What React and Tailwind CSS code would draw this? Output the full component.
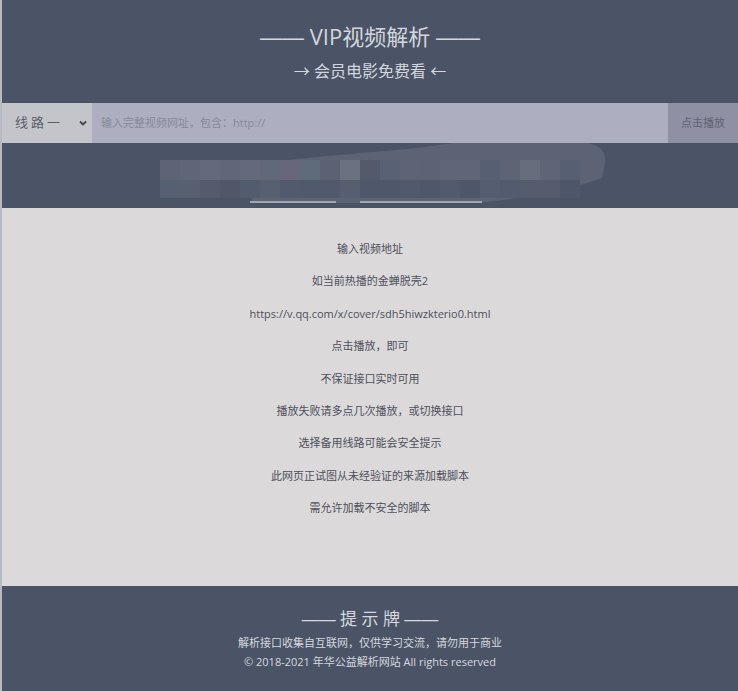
import React from "react";

const lines = [
    "输入视频地址",
    "如当前热播的金蝉脱壳2",
    "https://v.qq.com/x/cover/sdh5hiwzkterio0.html",
    "点击播放，即可",
    "不保证接口实时可用",
    "播放失败请多点几次播放，或切换接口",
    "选择备用线路可能会安全提示",
    "此网页正试图从未经验证的来源加载脚本",
    "需允许加载不安全的脚本",
];

const topRow = ["#5c6476", "#5e6678", "#626a7b", "#5f6779", "#646a7c", "#61687a", "#67667a", "#5f6a7a", "#5a6274", "#6a7282", "#525a6c", "#596174", "#5c6476", "#5b6375", "#5e6678", "#5e6678", "#576072", "#5c6476", "#666d7d", "#5d6577", "#576073"];
const bottomRow = ["#566073", "#575f71", "#535b6d", "#4f5769", "#535c6e", "#56606f", "#525a6d", "#505a6c", "#515a6c", "#565e70", "#4f576a", "#4f576a", "#505a6c", "#4e586a", "#525a6d", "#4e5669", "#555d70", "#535b6e", "#545c6e", "#545c6e", "#4e5669"];

const Mosaic = () => (
    <svg width="736" height="65" viewBox="0 0 736 65" className="block">
        <path d="M248 22 C330 10 390 10 450 0 L585 0 C600 2 604 10 603 20 L600 35 C560 50 500 58 470 60 L250 60 Z" fill="#5b6375" />
        {topRow.map((c, i) => (
            <rect key={"t" + i} x={158 + i * 20} y={17} width={20} height={20} fill={c} />
        ))}
        {bottomRow.map((c, i) => (
            <rect key={"b" + i} x={158 + i * 20} y={37} width={20} height={18} fill={c} />
        ))}
        <rect x={248} y={58} width={86} height={2} fill="#a0a5ae" />
        <rect x={358} y={58} width={122} height={2} fill="#a0a5ae" />
    </svg>
);

// Arial-width dashes join into one line
const Dash = () => <span style={{fontFamily: '"Liberation Sans", sans-serif'}}>——</span>;

export default function App() {
    return (
        <div className="w-[738px] h-[691px] overflow-hidden bg-[#b7bac0] pl-[2px]" style={{fontFamily: '"Open Sans", "Noto Sans CJK SC", sans-serif'}}>
            <div className="bg-[#4b5467] h-[103px] flex flex-col items-center pt-[22px] text-[#d3d6dc]">
                <div className="text-[22px] leading-[28px] h-[28px] whitespace-pre"><Dash /> VIP视频解析 <Dash /></div>
                <div className="text-[16px] leading-[24px] mt-[9px]">→ 会员电影免费看 ←</div>
            </div>
            <div className="flex h-[40px]">
                <div className="w-[90px] bg-[#c3c5cb] flex items-center justify-between pl-[13px] pr-[4px] text-[13px] text-[#5a5e6a]">
                    <span className="tracking-[3px]">线路一</span>
                    <svg width="10" height="10" viewBox="0 0 10 10">
                        <path d="M2 3.5 L5 6.5 L8 3.5" stroke="#3f4450" strokeWidth="1.8" fill="none" />
                    </svg>
                </div>
                <div className="flex-1 bg-[#adaebf] flex items-center pl-[9px] text-[11px] text-[#878a99]">
                    输入完整视频网址，包含：http://
                </div>
                <div className="w-[70px] bg-[#8f90a4] flex items-center justify-center text-[11px] text-[#5f6272]">
                    点击播放
                </div>
            </div>
            <div className="bg-[#4b5467] h-[65px]">
                <Mosaic />
            </div>
            <div className="bg-[#dbd9da] h-[378px] flex flex-col items-center pt-[31px] gap-[12.4px] text-[11px] leading-[20px] text-[#4d505c]">
                {lines.map((l) => (
                    <div key={l}>{l}</div>
                ))}
            </div>
            <div className="bg-[#4b5467] h-[105px] flex flex-col items-center pt-[21px] text-[#d5d8de]">
                <div className="text-[17px] leading-[24px] h-[24px] whitespace-pre"><Dash /> 提 示 牌 <Dash /></div>
                <div className="text-[11px] leading-[19px] mt-[2px]">解析接口收集自互联网，仅供学习交流，请勿用于商业</div>
                <div className="text-[11px] leading-[19px]">© 2018-2021 年华公益解析网站 All rights reserved</div>
            </div>
        </div>
    );
}
